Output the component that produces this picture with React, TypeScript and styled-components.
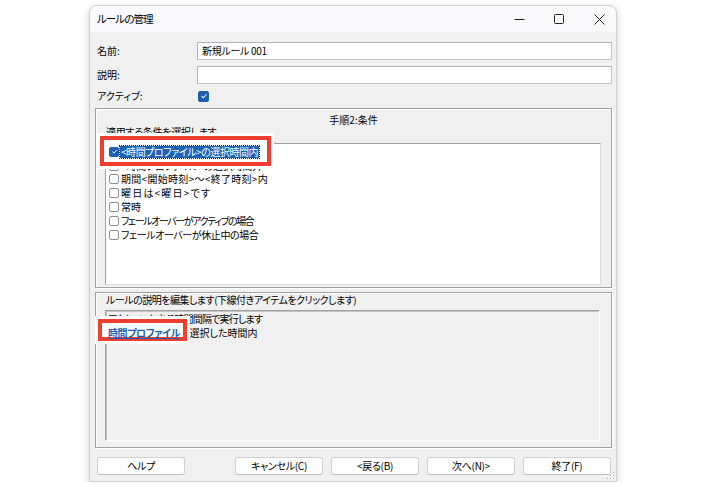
import React from "react";
import styled, { createGlobalStyle } from "styled-components";

const Global = createGlobalStyle`
  html, body { margin: 0; padding: 0; background: #ffffff; }
  body {
    font-family: "Noto Sans CJK JP", "Noto Sans", "Liberation Sans", sans-serif;
    font-size: 10px;
    color: #000;
    font-feature-settings: "palt";
  }
`;

const Window = styled.div`
  position: relative;
  box-sizing: border-box;
  width: 528px;
  height: 477px;
  margin: 5px 0 0 89px;
  border-radius: 8px 8px 0 0;
  border: 1px solid #cfcfcf;
  box-shadow: 0 2px 8px rgba(0, 0, 0, 0.18);
  background: #f0f0f0;
  display: flex;
  flex-direction: column;
  overflow: hidden;
`;

const TitleBar = styled.div`
  height: 26px;
  flex: none;
  background: #f9f9fb;
  display: flex;
  align-items: center;
  padding-left: 7px;
`;

const Title = styled.div`
  font-size: 10.5px;
  letter-spacing: -0.9px;
  line-height: 14px;
  flex: 1;
`;

const Controls = styled.div`
  display: flex;
  height: 100%;
  margin-right: -3px;
`;

const ControlButton = styled.div`
  width: 40px;
  height: 100%;
  display: flex;
  align-items: center;
  justify-content: center;
`;

const Body = styled.div`
  flex: 1;
  display: flex;
  flex-direction: column;
  padding: 10px 4px 7px 5px;
`;

const FieldRow = styled.div<{ $gap: number }>`
  display: flex;
  align-items: center;
  height: 18px;
  margin-top: ${(p) => p.$gap}px;
  flex: none;
`;

const Label = styled.div`
  width: 100px;
  padding-left: 2px;
  line-height: 14px;
`;

const TextInput = styled.div`
  flex: 1;
  box-sizing: border-box;
  height: 18px;
  background: #fff;
  border: 1px solid #b3b3b3;
  border-right-color: #c8c8c8;
  border-bottom-color: #c8c8c8;
  padding-left: 4px;
  line-height: 16px;
  letter-spacing: -0.3px;
`;

const CheckBox = styled.span<{ $checked?: boolean; $size: number }>`
  box-sizing: border-box;
  flex: none;
  width: ${(p) => p.$size}px;
  height: ${(p) => p.$size}px;
  border-radius: 2px;
  background: ${(p) => (p.$checked ? "#1c5fb3" : "#fff")};
  border: 1px solid ${(p) => (p.$checked ? "#1c5fb3" : "#8f8f8f")};
  display: inline-flex;
  align-items: center;
  justify-content: center;
`;

const ActiveBox = styled.div`
  margin-left: 1px;
  display: flex;
`;

const GroupBox = styled.div<{ $height: number; $gap: number }>`
  box-sizing: border-box;
  height: ${(p) => p.$height}px;
  margin-top: ${(p) => p.$gap}px;
  flex: none;
  border: 1px solid #a0a0a0;
  box-shadow: inset 1px 1px 0 #fff, 1px 1px 0 #fff;
  display: flex;
  flex-direction: column;
`;

const GroupTitle = styled.div`
  margin-top: 5px;
  text-align: center;
  line-height: 12px;
`;

const GroupLabel = styled.div<{ $top: number; $track: number }>`
  padding-left: 10px;
  margin-top: ${(p) => p.$top}px;
  line-height: 12px;
  letter-spacing: ${(p) => p.$track}px;
  white-space: nowrap;
`;

const ListBox = styled.div`
  flex: 1;
  margin: 5px 10px 2px 9px;
  background: #fff;
  border: 1px solid #a0a0a0;
  border-right-color: #dcdcdc;
  border-bottom-color: #dcdcdc;
  padding: 1px 0 0 3px;
`;

const ListItem = styled.div`
  display: flex;
  align-items: center;
  height: 13.8px;
  gap: 1px;
  white-space: nowrap;
`;

const FocusLayer = styled.div`
  position: relative;
  z-index: 2;
  display: flex;
  align-items: center;
  gap: 1px;
`;

const ItemText = styled.span<{ $selected?: boolean; $track: number }>`
  line-height: 12px;
  padding: 0 1px;
  letter-spacing: ${(p) => p.$track}px;
  background: ${(p) => (p.$selected ? "#1c63b7" : "transparent")};
  color: ${(p) => (p.$selected ? "#fff" : "#000")};
  outline: ${(p) => (p.$selected ? "1px dotted #222" : "none")};
`;

const DescBox = styled.div`
  flex: 1;
  margin: 4px 11px 6px 9px;
  border: 1px solid #a0a0a0;
  border-right-color: #fff;
  border-bottom-color: #fff;
  box-shadow: inset 1px 1px 0 #c4c4c4;
  padding: 1px 2px;
`;

const DescLine = styled.div<{ $track: number }>`
  line-height: 13.5px;
  white-space: nowrap;
  letter-spacing: ${(p) => p.$track}px;
`;

const Link = styled.span`
  position: relative;
  z-index: 2;
  color: #1a5fb4;
  text-decoration: underline;
  font-weight: 700;
  letter-spacing: -0.4px;
`;

const ButtonRow = styled.div`
  display: flex;
  margin-top: 9px;
  height: 18px;
  flex: none;
  gap: 8px;
  padding: 0 1px 0 2px;
`;

const Spacer = styled.div`
  flex: 1;
`;

const Button = styled.div`
  box-sizing: border-box;
  width: 88px;
  height: 18px;
  background: #fdfdfd;
  border: 1px solid #d0d0d0;
  border-bottom-color: #bdbdbd;
  border-radius: 3px;
  display: flex;
  align-items: center;
  justify-content: center;
  line-height: 12px;
  letter-spacing: -0.3px;
`;

const Annotation = styled.div<{ $x: number; $y: number; $w: number; $h: number }>`
  position: absolute;
  z-index: 1;
  box-sizing: border-box;
  left: ${(p) => p.$x}px;
  top: ${(p) => p.$y}px;
  width: ${(p) => p.$w}px;
  height: ${(p) => p.$h}px;
  border: 4px solid #ef3e2f;
  background: #fff;
  outline: 3px solid #fff;
`;

const Grip = styled.svg`
  position: absolute;
  right: 1px;
  bottom: 1px;
`;

const Check = ({ size }: { size: number }) => (
  <svg width={size - 3} height={size - 3} viewBox="0 0 10 10">
    <path d="M2 5.2 L4.2 7.3 L8.2 2.8" fill="none" stroke="#fff" strokeWidth="1.3" />
  </svg>
);

const items: { text: string; track: number }[] = [
  { text: "<時間プロファイル>の選択時間外", track: -0.2 },
  { text: "期間<開始時刻>〜<終了時刻>内", track: 0.3 },
  { text: "曜日は<曜日>です", track: 1.2 },
  { text: "常時", track: 0 },
  { text: "フェールオーバーがアクティブの場合", track: -1.4 },
  { text: "フェールオーバーが休止中の場合", track: -0.4 },
];

export default function App() {
  return (
    <>
      <Global />
      <Window>
        <TitleBar>
          <Title>ルールの管理</Title>
          <Controls>
            <ControlButton>
              <svg width="11" height="11" viewBox="0 0 11 11">
                <path d="M0.5 5.5 H10.5" stroke="#222" strokeWidth="1" />
              </svg>
            </ControlButton>
            <ControlButton>
              <svg width="10" height="10" viewBox="0 0 10 10">
                <rect x="0.5" y="0.5" width="9" height="9" rx="1" fill="none" stroke="#222" strokeWidth="1" />
              </svg>
            </ControlButton>
            <ControlButton>
              <svg width="11" height="11" viewBox="0 0 11 11">
                <path d="M0.5 0.5 L10.5 10.5 M10.5 0.5 L0.5 10.5" stroke="#222" strokeWidth="1" />
              </svg>
            </ControlButton>
          </Controls>
        </TitleBar>
        <Body>
          <FieldRow $gap={0}>
            <Label>名前:</Label>
            <TextInput>新規ルール 001</TextInput>
          </FieldRow>
          <FieldRow $gap={6}>
            <Label>説明:</Label>
            <TextInput />
          </FieldRow>
          <FieldRow $gap={3}>
            <Label>アクティブ:</Label>
            <ActiveBox>
              <CheckBox $checked $size={11}>
                <Check size={11} />
              </CheckBox>
            </ActiveBox>
          </FieldRow>
          <GroupBox $height={180} $gap={3}>
            <GroupTitle>手順2:条件</GroupTitle>
            <GroupLabel $top={0} $track={-0.3}>適用する条件を選択します</GroupLabel>
            <ListBox>
              <ListItem>
                <FocusLayer>
                  <CheckBox $checked $size={10}>
                    <Check size={10} />
                  </CheckBox>
                  <ItemText $selected $track={-0.45}>&lt;時間プロファイル&gt;の選択時間内</ItemText>
                </FocusLayer>
              </ListItem>
              {items.map((it) => (
                <ListItem key={it.text}>
                  <CheckBox $size={10} />
                  <ItemText $track={it.track}>{it.text}</ItemText>
                </ListItem>
              ))}
            </ListBox>
          </GroupBox>
          <GroupBox $height={156} $gap={4}>
            <GroupLabel $top={1} $track={-0.5}>
              ルールの説明を編集します(下線付きアイテムをクリックします)
            </GroupLabel>
            <DescBox>
              <DescLine $track={-0.8}>アクションを ある時間間隔で実行します</DescLine>
              <DescLine $track={0}>
                <Link>時間プロファイル</Link>の選択した時間内
              </DescLine>
            </DescBox>
          </GroupBox>
          <ButtonRow>
            <Button>ヘルプ</Button>
            <Spacer />
            <Button>キャンセル(C)</Button>
            <Button>&lt;戻る(B)</Button>
            <Button>次へ(N)&gt;</Button>
            <Button>終了(F)</Button>
          </ButtonRow>
        </Body>
        <Annotation $x={10} $y={130} $w={171} $h={30} />
        <Annotation $x={8} $y={313} $w={89} $h={22} />
        <Grip width="8" height="8" viewBox="0 0 8 8">
          <rect x="6" y="0" width="1" height="1" fill="#aaa" />
          <rect x="3" y="3" width="1" height="1" fill="#aaa" />
          <rect x="6" y="3" width="1" height="1" fill="#aaa" />
          <rect x="0" y="6" width="1" height="1" fill="#aaa" />
          <rect x="3" y="6" width="1" height="1" fill="#aaa" />
          <rect x="6" y="6" width="1" height="1" fill="#aaa" />
        </Grip>
      </Window>
    </>
  );
}
